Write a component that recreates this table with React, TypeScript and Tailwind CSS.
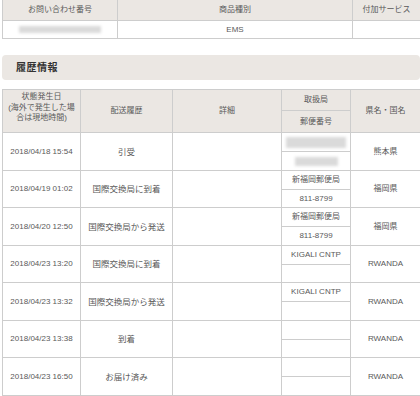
type Row = {
  date: string
  status: string
  office: string
  zip: string
  pref: string
  hidden?: boolean
}

const rows: Row[] = [
  { date: '2018/04/18 15:54', status: '引受', office: '', zip: '', pref: '熊本県', hidden: true },
  { date: '2018/04/19 01:02', status: '国際交換局に到着', office: '新福岡郵便局', zip: '811-8799', pref: '福岡県' },
  { date: '2018/04/20 12:50', status: '国際交換局から発送', office: '新福岡郵便局', zip: '811-8799', pref: '福岡県' },
  { date: '2018/04/23 13:20', status: '国際交換局に到着', office: 'KIGALI CNTP', zip: '', pref: 'RWANDA' },
  { date: '2018/04/23 13:32', status: '国際交換局から発送', office: 'KIGALI CNTP', zip: '', pref: 'RWANDA' },
  { date: '2018/04/23 13:38', status: '到着', office: '', zip: '', pref: 'RWANDA' },
  { date: '2018/04/23 16:50', status: 'お届け済み', office: '', zip: '', pref: 'RWANDA' },
]

const cell = 'border border-[#cdcdcd] text-center align-middle p-0'
const head = 'border border-[#cdcdcd] text-center align-middle p-0 bg-[#ebe7e3]'

function Blur({ w, h }: { w: string; h: string }) {
  return <div className={`mx-auto ${w} ${h} bg-[#dadada] blur-[1.5px]`} />
}

export default function App() {
  return (
    <div className="w-[420px] h-[396px] overflow-hidden bg-white text-[8px] leading-[10px] text-[#595959] font-['Liberation_Sans','Noto_Sans_CJK_JP',sans-serif]">
      <table className="table-fixed border-collapse w-[418px] ml-[2px] -mt-px">
        <colgroup>
          <col className="w-[115px]" />
          <col className="w-[235px]" />
          <col className="w-[68px]" />
        </colgroup>
        <tbody>
          <tr className="h-[21px]">
            <th className={`${head} font-normal`}>お問い合わせ番号</th>
            <th className={`${head} font-normal`}>商品種別</th>
            <th className={`${head} font-normal`}>付加サービス</th>
          </tr>
          <tr className="h-[18px]">
            <td className={cell}>
              <Blur w="w-[82px]" h="h-[7px]" />
            </td>
            <td className={cell}>EMS</td>
            <td className={cell}></td>
          </tr>
        </tbody>
      </table>

      <div className="mt-[16px] ml-[2px] w-[418px] h-[25px] rounded-[4px] bg-[#ebe7e3] flex items-center pl-[14px]">
        <h2 className="text-[10px] font-bold text-[#333] tracking-[0.5px]">履歴情報</h2>
      </div>

      <table className="table-fixed border-collapse w-[418px] ml-[2px] mt-[9px]">
        <colgroup>
          <col className="w-[78px]" />
          <col className="w-[92px]" />
          <col className="w-[109px]" />
          <col className="w-[69px]" />
          <col className="w-[70px]" />
        </colgroup>
        <thead>
          <tr className="h-[21px]">
            <th rowSpan={2} className={`${head} font-normal align-top pt-[2px] leading-[10.5px]`}>
              状態発生日
              <br />
              (海外で発生した場
              <br />
              合は現地時間)
            </th>
            <th rowSpan={2} className={`${head} font-normal`}>配送履歴</th>
            <th rowSpan={2} className={`${head} font-normal`}>詳細</th>
            <th className={`${head} font-normal`}>取扱局</th>
            <th rowSpan={2} className={`${head} font-normal`}>県名・国名</th>
          </tr>
          <tr className="h-[22px]">
            <th className={`${head} font-normal`}>郵便番号</th>
          </tr>
        </thead>
        <tbody>
          {rows.map((r, i) => {
            const bottom = i % 2 === 0 ? 'h-[19px]' : 'h-[18px]'
            return [
              <tr key={`${i}a`} className="h-[19px]">
                <td rowSpan={2} className={cell}>{r.date}</td>
                <td rowSpan={2} className={`${cell} text-[8.5px]`}>{r.status}</td>
                <td rowSpan={2} className={cell}></td>
                <td className={cell}>
                  {r.hidden ? <Blur w="w-[60px]" h="h-[11px]" /> : r.office}
                </td>
                <td rowSpan={2} className={cell}>{r.pref}</td>
              </tr>,
              <tr key={`${i}b`} className={bottom}>
                <td className={cell}>
                  {r.hidden ? <Blur w="w-[43px]" h="h-[9px]" /> : r.zip}
                </td>
              </tr>,
            ]
          })}
        </tbody>
      </table>
    </div>
  )
}
